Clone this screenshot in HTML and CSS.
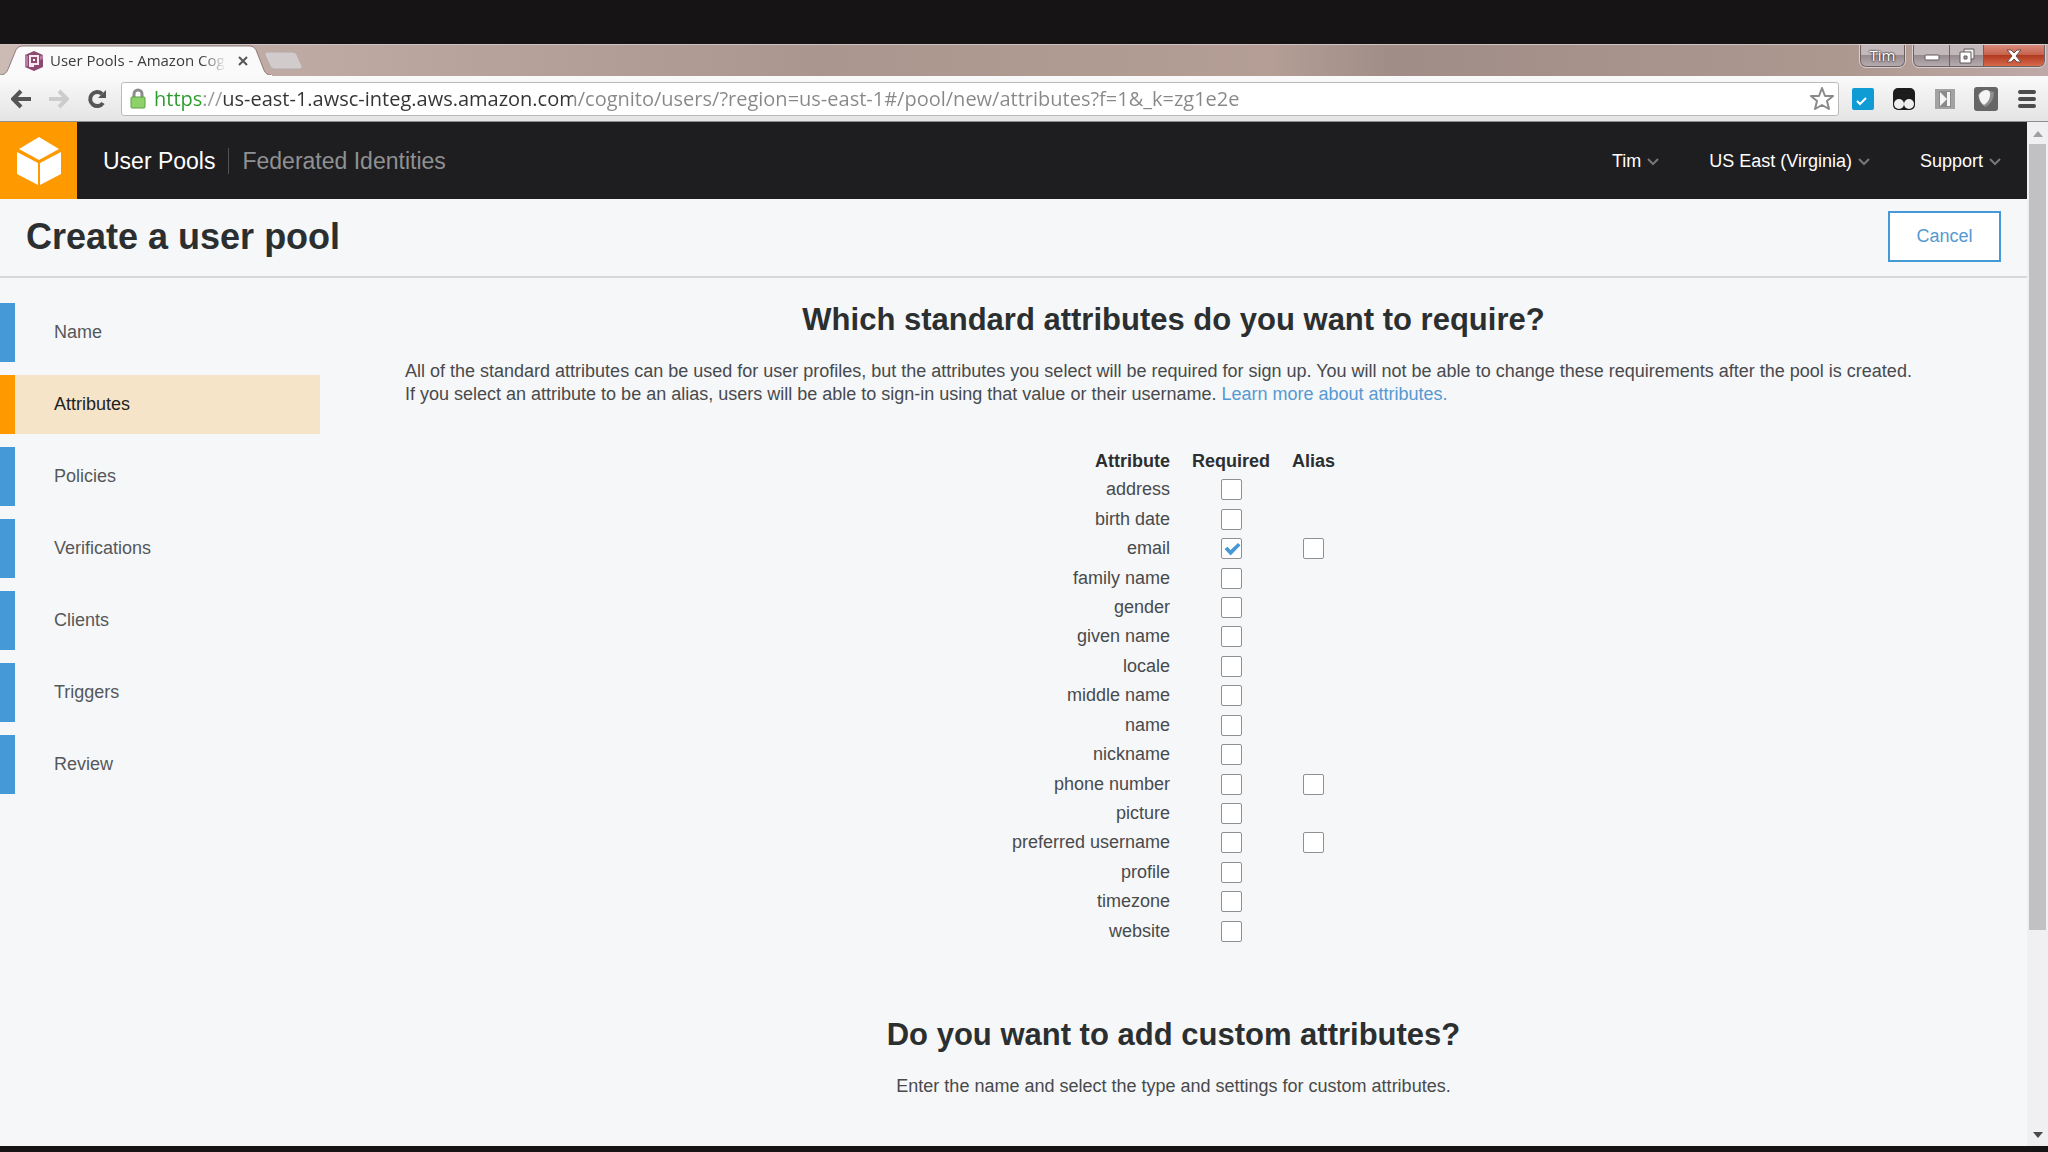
FILE: index.html
```html
<!DOCTYPE html>
<html lang="en">
<head>
    <meta charset="UTF-8">
    <meta name="viewport" content="width=device-width, initial-scale=1.0">
    <title>User Pools - Amazon Cognito</title>
    <link rel="stylesheet" href="styles.css">
</head>
<body>
    <div class="tab-strip">
        <div class="tab">
            <svg class="tab-shape" viewBox="0 0 272 32" preserveAspectRatio="none">
                <path d="M0 31 Q6 31 8 25 L16 5 Q18 1 22 1 H250 Q254 1 256 5 L264 26 Q266 31 271 31 V32 H0 Z" fill="#fbfafb" stroke="#8b7a78"/>
                <path d="M0 32 H272" stroke="#fbfafb" stroke-width="2"/>
            </svg>
            <div class="tab-content">
                <svg class="favicon" width="18" height="20" viewBox="0 0 18 20">
                    <path d="M9 0 L18 4 V16 L9 20 L0 16 V4 Z" fill="#8d4a70"/>
                    <path d="M0 4 L3 5 V15 L0 16 Z M15 5 L18 4 V8 L15 9 Z" fill="#b97ba0"/>
                    <path d="M4 4 H14 V14 H9 V16 H4 Z" fill="#f6e6ef"/>
                    <path d="M6 6 H12 V12 H6 Z" fill="#8d4a70"/>
                    <path d="M8 8 H10 V10 H8 Z" fill="#fff"/>
                </svg>
                <span class="tab-title">User Pools - Amazon Cog</span>
                <button class="tab-close" aria-label="Close tab">
                    <svg width="12" height="12" viewBox="0 0 12 12"><path d="M2 2 L10 10 M10 2 L2 10" stroke="#555" stroke-width="2"/></svg>
                </button>
            </div>
        </div>
        <button class="new-tab" aria-label="New tab">
            <svg width="40" height="20" viewBox="0 0 40 20"><path d="M3 1 H29 Q32 1 33 4 L38 15 Q39 18 36 18 H10 Q7 18 6 15 L1 4 Q0 1 3 1 Z" fill="#d2cbcc" stroke="#b5a8a8"/></svg>
        </button>
        <div class="window-buttons">
            <button class="window-user">Tim</button>
            <div class="window-group">
                <button class="window-min" aria-label="Minimize">
                    <svg width="16" height="16" viewBox="0 0 16 16"><rect x="1" y="7" width="14" height="5" rx="1" fill="#fff" stroke="#625a5e"/></svg>
                </button>
                <button class="window-max" aria-label="Restore">
                    <svg width="18" height="16" viewBox="0 0 18 16">
                        <path d="M6 1 H16 V11 H6 Z" fill="#eee" stroke="#625a5e"/>
                        <path d="M2 4 H13 V15 H2 Z" fill="#fff" stroke="#625a5e"/>
                        <path d="M6 8 H9 V11 H6 Z" fill="#aaa2a5" stroke="#625a5e"/>
                    </svg>
                </button>
                <button class="window-close" aria-label="Close window">
                    <svg width="16" height="14" viewBox="0 0 16 14"><path d="M1 1 H5 L8 4 L11 1 H15 L10 7 L15 13 H11 L8 10 L5 13 H1 L6 7 Z" fill="#fff" stroke="#6b4a4a"/></svg>
                </button>
            </div>
        </div>
    </div>

    <div class="toolbar">
        <button class="tool" aria-label="Back">
            <svg width="20" height="20" viewBox="0 0 20 20"><path d="M10 2 L2 10 L10 18 M2 10 H20" fill="none" stroke="#555" stroke-width="4"/></svg>
        </button>
        <button class="tool" aria-label="Forward">
            <svg width="20" height="20" viewBox="0 0 20 20"><path d="M10 2 L18 10 L10 18 M18 10 H0" fill="none" stroke="#ccc" stroke-width="4"/></svg>
        </button>
        <button class="tool" aria-label="Reload">
            <svg width="20" height="20" viewBox="0 0 20 20">
                <path d="M15 5 A7 7 0 1 0 16 14" fill="none" stroke="#555" stroke-width="4"/>
                <path d="M19 1 V9 H11 Z" fill="#555"/>
            </svg>
        </button>
        <div class="address">
            <svg width="16" height="22" viewBox="0 0 16 22">
                <path d="M4 11 V6 A4 4 0 0 1 12 6 V11" fill="none" stroke="#8c8c8c" stroke-width="3"/>
                <rect x="1" y="9" width="14" height="11" rx="1" fill="#8ed26a" stroke="#5d9e45"/>
            </svg>
            <input class="url" type="text" aria-label="Address" value="https://us-east-1.awsc-integ.aws.amazon.com/cognito/users/?region=us-east-1#/pool/new/attributes?f=1&amp;_k=zg1e2e">
            <button class="star" aria-label="Bookmark this page">
                <svg width="24" height="24" viewBox="0 0 24 24"><path d="M12 1 L15 9 L23 9 L17 14 L19 22 L12 18 L5 22 L7 14 L1 9 L9 9 Z" fill="#fff" stroke="#8a8a8a" stroke-width="2" stroke-linejoin="round"/></svg>
            </button>
        </div>
        <div class="extensions">
            <button class="tool" aria-label="Tasks">
                <svg width="22" height="22" viewBox="0 0 22 22"><rect width="22" height="22" rx="2" fill="#0f9bd3"/><path d="M5 13 L8 16 L14 10" fill="none" stroke="#fff" stroke-width="2"/></svg>
            </button>
            <button class="tool" aria-label="User scripts">
                <svg width="22" height="22" viewBox="0 0 22 22"><rect width="22" height="22" rx="5" fill="#1c1c1c"/><circle cx="6" cy="16" r="5" fill="#eee"/><circle cx="16" cy="16" r="5" fill="#eee"/></svg>
            </button>
            <button class="tool" aria-label="Skip">
                <svg width="20" height="20" viewBox="0 0 20 20"><rect width="20" height="20" fill="#a2a2a2"/><path d="M4 2 H16 V18 H4 Z" fill="#8a8a8a"/><path d="M5 3 L12 10 L5 17 Z M12 3 H15 V17 H12 Z" fill="#f4f4f4"/></svg>
            </button>
            <button class="tool" aria-label="Shield">
                <svg width="24" height="24" viewBox="0 0 24 24"><rect width="24" height="24" rx="3" fill="#666"/><path d="M4 8 Q7 3 12 3 L20 5 Q20 16 11 20 Q5 16 4 8 Z" fill="#8e8e8e"/><path d="M5 8 Q8 3 13 3 Q17 4 16 9 Q15 15 10 18 Q5 15 5 8 Z" fill="#f4f4f4"/></svg>
            </button>
            <button class="tool" aria-label="Menu">
                <svg width="18" height="18" viewBox="0 0 18 18"><path d="M2 2 H16 M2 9 H16 M2 16 H16" stroke="#4c4c4c" stroke-width="4" stroke-linecap="round"/></svg>
            </button>
        </div>
    </div>

    <div class="viewport">
        <div class="page">
            <header class="header">
                <a class="logo" href="#" aria-label="Services">
                    <svg width="46" height="50" viewBox="0 0 46 50" fill="#fff">
                        <path d="M23 1 L43 13 L23 24 L3 13 Z"/>
                        <path d="M1 16 L22 27 V49 L1 38 Z"/>
                        <path d="M45 16 L24 27 V49 L45 38 Z"/>
                    </svg>
                </a>
                <nav class="sections">
                    <a class="current" href="#">User Pools</a>
                    <a href="#">Federated Identities</a>
                </nav>
                <div class="menus">
                    <button class="menu">Tim<svg width="12" height="8" viewBox="0 0 12 8"><path d="M1 1 L6 6 L11 1"/></svg></button>
                    <button class="menu">US East (Virginia)<svg width="12" height="8" viewBox="0 0 12 8"><path d="M1 1 L6 6 L11 1"/></svg></button>
                    <button class="menu">Support<svg width="12" height="8" viewBox="0 0 12 8"><path d="M1 1 L6 6 L11 1"/></svg></button>
                </div>
            </header>

            <div class="title-bar">
                <h1>Create a user pool</h1>
                <button class="cancel">Cancel</button>
            </div>

            <div class="columns">
                <nav class="steps">
                    <a href="#">Name</a>
                    <a class="active" href="#">Attributes</a>
                    <a href="#">Policies</a>
                    <a href="#">Verifications</a>
                    <a href="#">Clients</a>
                    <a href="#">Triggers</a>
                    <a href="#">Review</a>
                </nav>

                <main class="content">
                    <h2>Which standard attributes do you want to require?</h2>
                    <p>All of the standard attributes can be used for user profiles, but the attributes you select will be required for sign up. You will not be able to change these requirements after the pool is created.<br>If you select an attribute to be an alias, users will be able to sign-in using that value or their username. <a href="#">Learn more about attributes.</a></p>

                    <table class="attributes">
                        <thead>
                            <tr><th>Attribute</th><th>Required</th><th>Alias</th></tr>
                        </thead>
                        <tbody>
                            <tr><td><label for="address">address</label></td><td><input type="checkbox" id="address"></td><td></td></tr>
                            <tr><td><label for="birth-date">birth date</label></td><td><input type="checkbox" id="birth-date"></td><td></td></tr>
                            <tr><td><label for="email">email</label></td><td><input type="checkbox" id="email" checked></td><td><input type="checkbox" aria-label="email alias"></td></tr>
                            <tr><td><label for="family-name">family name</label></td><td><input type="checkbox" id="family-name"></td><td></td></tr>
                            <tr><td><label for="gender">gender</label></td><td><input type="checkbox" id="gender"></td><td></td></tr>
                            <tr><td><label for="given-name">given name</label></td><td><input type="checkbox" id="given-name"></td><td></td></tr>
                            <tr><td><label for="locale">locale</label></td><td><input type="checkbox" id="locale"></td><td></td></tr>
                            <tr><td><label for="middle-name">middle name</label></td><td><input type="checkbox" id="middle-name"></td><td></td></tr>
                            <tr><td><label for="name">name</label></td><td><input type="checkbox" id="name"></td><td></td></tr>
                            <tr><td><label for="nickname">nickname</label></td><td><input type="checkbox" id="nickname"></td><td></td></tr>
                            <tr><td><label for="phone-number">phone number</label></td><td><input type="checkbox" id="phone-number"></td><td><input type="checkbox" aria-label="phone number alias"></td></tr>
                            <tr><td><label for="picture">picture</label></td><td><input type="checkbox" id="picture"></td><td></td></tr>
                            <tr><td><label for="preferred-username">preferred username</label></td><td><input type="checkbox" id="preferred-username"></td><td><input type="checkbox" aria-label="preferred username alias"></td></tr>
                            <tr><td><label for="profile">profile</label></td><td><input type="checkbox" id="profile"></td><td></td></tr>
                            <tr><td><label for="timezone">timezone</label></td><td><input type="checkbox" id="timezone"></td><td></td></tr>
                            <tr><td><label for="website">website</label></td><td><input type="checkbox" id="website"></td><td></td></tr>
                        </tbody>
                    </table>

                    <h2>Do you want to add custom attributes?</h2>
                    <p class="centered">Enter the name and select the type and settings for custom attributes.</p>
                </main>
            </div>
        </div>

        <div class="scrollbar">
            <svg width="18" height="22" viewBox="0 0 18 22"><path d="M4 15 L9 9 L14 15 Z" fill="#a0a0a2"/></svg>
            <div class="track"><div class="thumb"></div></div>
            <svg width="18" height="20" viewBox="0 0 18 20"><path d="M4 6 H14 L9 12 Z" fill="#4a4a4c"/></svg>
        </div>
    </div>
</body>
</html>
```

FILE: styles.css
```css
* {
    box-sizing: border-box;
}
body {
    display: flex;
    flex-direction: column;
    height: 100vh;
    margin: 0;
    padding: 44px 0 6px;
    overflow: hidden;
    background-color: #161415;
    color: #484a4c;
    font-family: "Liberation Sans", Arial, sans-serif;
    font-size: 18px;
    line-height: 23px;
}
button {
    padding: 0;
    border: none;
    background: none;
    color: inherit;
    font: inherit;
    cursor: pointer;
}
svg {
    display: block;
    flex-shrink: 0;
}
a {
    color: #5599d2;
    text-decoration: none;
}

/* browser window */
.tab-strip {
    display: flex;
    flex-shrink: 0;
    height: 32px;
    border-top: 1px solid #cfc3c1;
    background: linear-gradient(90deg, #ccbab5 0, #c0aba5 12%, #aa968e 40%, #b49e96 62%, #a08d87 68%, #ad9890 90%, #bfa9a8 100%);
}
.tab {
    position: relative;
    width: 272px;
}
.tab-shape {
    position: absolute;
    top: 0;
    left: 0;
    width: 100%;
    height: 100%;
}
.tab-content {
    position: relative;
    display: flex;
    align-items: center;
    gap: 7px;
    height: 31px;
    padding-left: 25px;
}
.tab-title {
    width: 180px;
    color: #3c3c3c;
    font-family: "Open Sans", sans-serif;
    font-size: 15px;
    white-space: nowrap;
    -webkit-mask-image: linear-gradient(90deg, #000 84%, transparent 98%);
    mask-image: linear-gradient(90deg, #000 84%, transparent 98%);
}
.new-tab {
    align-self: center;
    margin-left: -8px;
}
.window-buttons {
    display: flex;
    align-items: flex-start;
    gap: 8px;
    margin-left: auto;
    padding-right: 3px;
}
.window-user,
.window-group {
    height: 22px;
    overflow: hidden;
    border: 1px solid #6d6164;
    border-top: none;
    border-radius: 0 0 6px 6px;
    outline: 1px solid #d9cfce;
    background: linear-gradient(#c3b9bb 45%, #978b8e 50%, #b5abae);
}
.window-user {
    width: 45px;
    color: #fff;
    font-family: "Open Sans", sans-serif;
    font-size: 15px;
    line-height: 21px;
    text-shadow: 0 0 2px #222, 0 0 2px #222;
}
.window-group {
    display: flex;
}
.window-group button {
    display: flex;
    align-items: center;
    justify-content: center;
    width: 36px;
    border-right: 1px solid #6d6164;
}
.window-group .window-max {
    width: 34px;
}
.window-group .window-close {
    width: 60px;
    border: none;
    background: linear-gradient(#d98a7a, #c8644f 45%, #b13a20 50%, #d8694b);
}
.toolbar {
    display: flex;
    flex-shrink: 0;
    align-items: center;
    height: 46px;
    padding: 0 2px;
    border-bottom: 1px solid #8f8f91;
    background: linear-gradient(#fbfafb, #e4e4e5);
}
.tool {
    display: flex;
    align-items: center;
    justify-content: center;
    width: 38px;
    height: 34px;
}
.address {
    display: flex;
    flex: 1;
    align-items: center;
    gap: 8px;
    height: 34px;
    margin: 0 5px;
    padding: 0 4px 0 8px;
    border: 1px solid #bbb;
    border-radius: 3px;
    background-color: #fff;
}
.url {
    flex: 1;
    min-width: 0;
    height: 32px;
    padding: 0;
    border: none;
    outline: none;
    /* scheme, separator, host, path */
    background: linear-gradient(90deg, #2b9a2b 50px, #999 50px, #999 68px, #333 68px, #333 419px, #888 419px);
    -webkit-background-clip: text;
    background-clip: text;
    color: transparent;
    font-family: "Open Sans", sans-serif;
    font-size: 20px;
}
.extensions {
    display: flex;
    gap: 3px;
}

/* console page */
.viewport {
    display: flex;
    flex: 1;
    min-height: 0;
    background-color: #f6f7f9;
}
.page {
    flex: 1;
    min-width: 0;
    overflow: hidden;
}
.header {
    display: flex;
    align-items: center;
    height: 77px;
    background-color: #1e1d1f;
}
.logo {
    display: flex;
    align-items: center;
    justify-content: center;
    width: 77px;
    height: 100%;
    background-color: #ff9900;
}
.sections {
    display: flex;
    margin-left: 26px;
    font-size: 23px;
    line-height: 26px;
}
.sections a {
    color: #8f9192;
}
.sections .current {
    margin-right: 13px;
    padding-right: 13px;
    border-right: 1px solid #505152;
    color: #fff;
}
.menus {
    display: flex;
    gap: 50px;
    margin-left: auto;
    padding: 2px 26px 0 0;
}
.menu {
    display: flex;
    align-items: center;
    gap: 6px;
    color: #fff;
}
.menu path {
    fill: none;
    stroke: #77787a;
    stroke-width: 2;
}
.title-bar {
    display: flex;
    align-items: center;
    justify-content: space-between;
    height: 79px;
    padding: 0 26px 2px;
    border-bottom: 2px solid #d6d9dc;
}
h1,
h2 {
    margin: 0;
    color: #2c2f30;
}
h1 {
    font-size: 36px;
    line-height: 40px;
}
h2 {
    font-size: 31px;
    line-height: 36px;
    text-align: center;
}
.cancel {
    width: 113px;
    height: 51px;
    border: 2px solid #4499d6;
    background-color: #fff;
    color: #5599d2;
}
.columns {
    display: flex;
}
.steps {
    display: flex;
    flex-direction: column;
    gap: 13px;
    width: 320px;
    padding-top: 25px;
}
.steps a {
    padding: 18px 0 18px 39px;
    border-left: 15px solid #4499d6;
    color: #55585a;
}
.steps .active {
    border-color: #ff9900;
    background-color: #f6e4c9;
    color: #222;
}
.content {
    flex: 1;
    min-width: 0;
    padding: 24px 85px 0;
}
.content p {
    margin: 22px 0 42px;
}
.content .centered {
    text-align: center;
}
.attributes {
    height: 498px;
    margin: 0 auto 71px;
    border-collapse: collapse;
    text-align: center;
}
.attributes th,
.attributes td {
    padding: 0 11px;
}
.attributes th {
    height: 27px;
    color: #2c2f30;
}
.attributes th:first-child,
.attributes td:first-child {
    text-align: right;
}
.attributes input {
    display: block;
    width: 21px;
    height: 21px;
    margin: 0 auto;
    border: 1px solid #8e9092;
    border-radius: 2px;
    background-color: #fff;
    appearance: none;
}
.attributes input:checked::before {
    content: "";
    display: block;
    width: 16px;
    height: 14px;
    margin: 3px 0 0 3px;
    background-color: #4499d6;
    clip-path: polygon(0 50%, 18% 34%, 38% 56%, 84% 6%, 100% 22%, 38% 96%);
}
.scrollbar {
    display: flex;
    flex-direction: column;
    align-items: center;
    width: 21px;
    background-color: #f0f0f2;
}
.track {
    flex: 1;
    width: 17px;
}
.thumb {
    height: 80%;
    background-color: #c1c1c3;
}
```
